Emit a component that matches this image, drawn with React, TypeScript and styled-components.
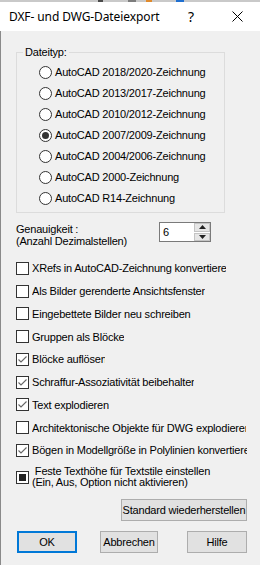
import React from "react";
import styled, { createGlobalStyle } from "styled-components";

const Global = createGlobalStyle`
  html, body { margin: 0; padding: 0; background: #f0f0f0; }
  * { box-sizing: border-box; }
`;

const Window = styled.div`
  width: 260px;
  height: 565px;
  display: flex;
  flex-direction: column;
  overflow: hidden;
  font-family: "Liberation Sans", Arial, sans-serif;
  font-size: 11px;
  letter-spacing: -0.2px;
  color: #000;
`;

const DesktopEdge = styled.div`
  height: 2px;
  flex: none;
  background: linear-gradient(
    to right,
    #c9c9c9 0 98px,
    #4a4a4a 98px 103px,
    #c9c9c9 103px 128px,
    #7d7d7d 128px 136px,
    #c9c9c9 136px 146px,
    #e08a2c 146px 152px,
    #c9c9c9 152px 176px,
    #1f6fd0 176px 184px,
    #c9c9c9 184px 260px
  );
`;

const TitleBar = styled.div`
  height: 29px;
  flex: none;
  background: #fff;
  display: flex;
  align-items: center;
  padding-left: 9px;
  font-family: "Noto Sans", "Open Sans", sans-serif;
  font-size: 12px;
  letter-spacing: -0.1px;
`;

const Title = styled.span`
  flex: 1;
  white-space: nowrap;
`;

const CaptionButton = styled.span`
  width: 46px;
  height: 29px;
  display: flex;
  align-items: center;
  justify-content: center;
  font-size: 14px;
`;

const Body = styled.div`
  flex: 1;
  background: #f0f0f0;
  border-left: 1px solid #8a8a8a;
  padding: 0 13px 0 15px;
  display: flex;
  flex-direction: column;
`;

const Group = styled.fieldset`
  margin: 14px 0 0 0;
  width: 209px;
  border: 1px solid #dcdcdc;
  padding: 2.5px 0 3px 0;
  min-inline-size: 0;
`;

const Legend = styled.legend`
  margin-left: 6px;
  padding: 0 2px;
  line-height: 14px;
`;

const RadioRow = styled.label`
  height: 21px;
  display: flex;
  align-items: center;
  padding-left: 22px;
  gap: 3px;
  white-space: nowrap;
`;

const RadioCircle = styled.span<{ $on?: boolean }>`
  width: 13px;
  height: 13px;
  flex: none;
  border-radius: 50%;
  border: 1px solid #333;
  background: #fff;
  display: flex;
  align-items: center;
  justify-content: center;
  &::after {
    content: "";
    width: 7px;
    height: 7px;
    border-radius: 50%;
    background: ${(p) => (p.$on ? "#333" : "transparent")};
  }
`;

const PrecisionRow = styled.div`
  margin-top: 9.5px;
  display: flex;
  align-items: flex-start;
`;

const PrecisionLabel = styled.div`
  width: 143px;
  padding-top: 1px;
  line-height: 12px;
`;

const Spin = styled.div`
  width: 52px;
  height: 20px;
  border: 1px solid #7a7a7a;
  background: #fff;
  display: flex;
`;

const SpinValue = styled.span`
  flex: 1;
  padding-left: 3px;
  line-height: 18px;
`;

const SpinButtons = styled.div`
  width: 16px;
  display: flex;
  flex-direction: column;
  gap: 1px;
  background: #fff;
`;

const SpinHalf = styled.span`
  flex: 1;
  background: #e6e6e6;
  border: 1px solid #c4c4c4;
  display: flex;
  align-items: center;
  justify-content: center;
`;

const CheckList = styled.div`
  margin-top: 10px;
  display: flex;
  flex-direction: column;
`;

const CheckRow = styled.label`
  height: 22.75px;
  display: flex;
  align-items: center;
  gap: 3px;
`;

const BoxMark = styled.span`
  width: 13px;
  height: 13px;
  flex: none;
  border: 1px solid #333;
  background: #fff;
  display: flex;
  align-items: center;
  justify-content: center;
`;

const Fill = styled.span`
  width: 7px;
  height: 7px;
  background: #222;
`;

const CheckText = styled.span<{ $clip?: number }>`
  white-space: pre;
  overflow: hidden;
  max-width: ${(p) => (p.$clip ? `${p.$clip}px` : "none")};
`;

const MultiRow = styled.label`
  margin-top: 4.5px;
  display: flex;
  align-items: center;
  gap: 3px;
`;

const MultiText = styled.span`
  line-height: 11px;
  white-space: pre;
`;

const Button = styled.button<{ $w: number; $default?: boolean }>`
  width: ${(p) => p.$w}px;
  height: 22px;
  margin: 0;
  padding: 0;
  background: #e1e1e1;
  border: ${(p) => (p.$default ? "2px solid #0078d7" : "1px solid #adadad")};
  font-family: "Liberation Sans", Arial, sans-serif;
  font-size: 11px;
  font-weight: 400;
  letter-spacing: -0.2px;
  color: #000;
  white-space: nowrap;
`;

const RestoreButton = styled(Button)`
  align-self: flex-end;
  margin-top: 10.5px;
`;

const ButtonRow = styled.div`
  margin-top: 10px;
  display: flex;
  padding-left: 1px;
`;

const Spacer = styled.span<{ $w: number }>`
  width: ${(p) => p.$w}px;
  flex: none;
`;

const Check = ({ on }: { on?: boolean }) => (
  <BoxMark>
    {on && (
      <svg width="11" height="11" viewBox="0 0 11 11">
        <polyline points="1.5,5.5 4,8 9.5,2.5" fill="none" stroke="#666" strokeWidth="1.1" />
      </svg>
    )}
  </BoxMark>
);

const radios = [
  "AutoCAD 2018/2020-Zeichnung",
  "AutoCAD 2013/2017-Zeichnung",
  "AutoCAD 2010/2012-Zeichnung",
  "AutoCAD 2007/2009-Zeichnung",
  "AutoCAD 2004/2006-Zeichnung",
  "AutoCAD 2000-Zeichnung",
  "AutoCAD R14-Zeichnung",
];

const checks: { text: string; on?: boolean; clip?: number }[] = [
  { text: "XRefs in AutoCAD-Zeichnung konvertieren", clip: 194 },
  { text: "Als Bilder gerenderte Ansichtsfenster" },
  { text: "Eingebettete Bilder neu schreiben" },
  { text: "Gruppen als Blöcke" },
  { text: "Blöcke auflösen", on: true, clip: 73 },
  { text: "Schraffur-Assoziativität beibehalten", on: true, clip: 162 },
  { text: "Text explodieren", on: true },
  { text: "Architektonische Objekte für DWG explodieren", clip: 214 },
  { text: "Bögen in Modellgröße in Polylinien konvertieren", on: true, clip: 219 },
];

export default function App() {
  return (
    <Window>
      <Global />
      <DesktopEdge />
      <TitleBar>
        <Title>DXF- und DWG-Dateiexport</Title>
        <CaptionButton>?</CaptionButton>
        <CaptionButton>
          <svg width="11" height="11" viewBox="0 0 11 11">
            <path d="M0.5 0.5L10.5 10.5M10.5 0.5L0.5 10.5" stroke="#000" strokeWidth="1" />
          </svg>
        </CaptionButton>
      </TitleBar>
      <Body>
        <Group>
          <Legend>Dateityp:</Legend>
          {radios.map((r, i) => (
            <RadioRow key={r}>
              <RadioCircle $on={i === 3} />
              <span>{r}</span>
            </RadioRow>
          ))}
        </Group>
        <PrecisionRow>
          <PrecisionLabel>
            Genauigkeit :<br />(Anzahl Dezimalstellen)
          </PrecisionLabel>
          <Spin>
            <SpinValue>6</SpinValue>
            <SpinButtons>
              <SpinHalf>
                <svg width="7" height="4" viewBox="0 0 7 4">
                  <polygon points="3.5,0 7,4 0,4" fill="#222" />
                </svg>
              </SpinHalf>
              <SpinHalf>
                <svg width="7" height="4" viewBox="0 0 7 4">
                  <polygon points="0,0 7,0 3.5,4" fill="#222" />
                </svg>
              </SpinHalf>
            </SpinButtons>
          </Spin>
        </PrecisionRow>
        <CheckList>
          {checks.map((c) => (
            <CheckRow key={c.text}>
              <Check on={c.on} />
              <CheckText $clip={c.clip}>{c.text}</CheckText>
            </CheckRow>
          ))}
        </CheckList>
        <MultiRow>
          <BoxMark>
            <Fill />
          </BoxMark>
          <MultiText>
            {" Feste Texthöhe für Textstile einstellen\n(Ein, Aus, Option nicht aktivieren)"}
          </MultiText>
        </MultiRow>
        <RestoreButton $w={126}>Standard wiederherstellen</RestoreButton>
        <ButtonRow>
          <Button $w={60} $default>
            OK
          </Button>
          <Spacer $w={23} />
          <Button $w={58}>Abbrechen</Button>
          <Spacer $w={29} />
          <Button $w={60}>Hilfe</Button>
        </ButtonRow>
      </Body>
    </Window>
  );
}
